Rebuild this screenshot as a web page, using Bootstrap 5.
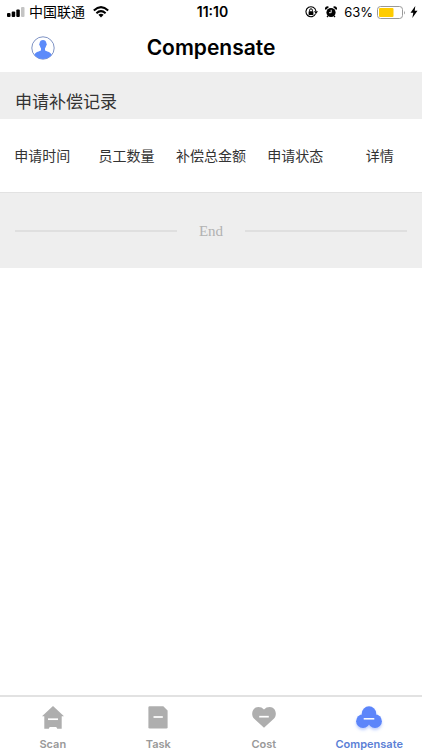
<!DOCTYPE html>
<html lang="zh-CN">
<head>
<meta charset="utf-8">
<meta name="viewport" content="width=device-width, initial-scale=1">
<title>Compensate</title>
<link href="https://cdn.jsdelivr.net/npm/bootstrap@5.3.0/dist/css/bootstrap.min.css" rel="stylesheet">
<style>
  body { font-family: Inter, "Noto Sans CJK SC", sans-serif; color: #333; }
  svg { display: block; flex: none; }
  .status-bar { height: 24px; font-size: 14px; line-height: 24px; color: #000; padding: 0 4px 0 7px; }
  .status-side { flex: 1 1 0; }
  .status-icons { gap: 7px; }
  .battery-group { gap: 4px; font-size: 13px; }
  .title-bar { height: 48px; }
  .title-side { flex: 1 1 0; padding-left: 31px; }
  .page-title { font-size: 21px; line-height: 28px; font-weight: 600; color: #000; }
  .band { background: #eee; }
  .section-title { font-size: 17px; line-height: 20px; padding: 20px 15px 7px; }
  .records { table-layout: fixed; font-size: 14px; line-height: 20px; border-bottom: 1px solid #e2e2e2; }
  .records th { padding: 27px 0 26px; font-weight: 400; color: #333; border: 0; }
  .end-band { padding: 28px 15px 27px; gap: 22px; font-family: "Liberation Serif", serif; font-size: 15px; line-height: 20px; color: #b2b2b2; }
  .rule { height: 2px; background: #dfdfdf; }
  .tabs { border-top: 2px solid #e2e2e2; padding-top: 7px; }
  .tab-link { color: #999; font-size: 11px; line-height: 12px; font-weight: 600; gap: 8px; }
  .tab-link.active { color: #5b7fd6; }
</style>
</head>
<body class="bg-white d-flex flex-column min-vh-100">
<header>
  <div class="status-bar d-flex align-items-center">
    <div class="status-side d-flex align-items-center">
      <svg width="18" height="12" viewBox="0 0 18 12"><rect y="7" width="3.5" height="4" rx="1"/><rect x="4.7" y="5.5" width="3.5" height="5.5" rx="1"/><rect x="9.3" y="3.5" width="3.5" height="7.5" rx="1"/><rect x="14" y="1" width="3.5" height="10" rx="1" fill="#c4c4c4"/></svg>
      <span class="ms-1 me-2">中国联通</span>
      <svg width="16" height="12" viewBox="0 0 16 12"><g fill="none" stroke="#000" stroke-width="2"><path d="M.8 4.400Q8-2.100 15.200 4.400"/><path d="M3.400 7.200Q8 3.100 12.600 7.200"/></g><path d="M5.400 8.800Q8 6.800 10.600 8.800L8 11.600z"/></svg>
    </div>
    <div class="fw-semibold">11:10</div>
    <div class="status-side status-icons d-flex align-items-center justify-content-end">
      <svg width="13" height="12" viewBox="0 0 13 12"><path d="M10.6 7.6A5 5 0 1 1 10.9 5" fill="none" stroke="#000" stroke-width="1.1"/><path d="M8.900 5.200h4.100L11 8z"/><rect x="3.600" y="5.300" width="4.800" height="3.600" rx=".5"/><path d="M4.600 5.500V4.200a1.400 1.400 0 0 1 2.800 0v1.300" fill="none" stroke="#000"/></svg>
      <svg width="12" height="12" viewBox="0 0 12 12"><circle cx="6" cy="6.500" r="4.600"/><path d="M.6 3.900A2.200 2.200 0 0 1 4 1.100zM11.400 3.900A2.200 2.200 0 0 0 8 1.100z"/><path d="M3 9.800L2 11M9 9.800L10 11" stroke="#000" stroke-width="1.200"/><path d="M6.200 3.800v2.900H4" fill="none" stroke="#fff" stroke-width=".9"/></svg>
      <div class="battery-group d-flex align-items-center">
        <span>63%</span>
        <svg width="29" height="13" viewBox="0 0 29 13"><rect x=".5" y=".5" width="25" height="12" rx="3" fill="#fff" stroke="#999"/><rect x="2" y="2" width="14.500" height="9" rx="1" fill="#fc0"/><path d="M27 4.500q1.700 2 0 4z" fill="#999"/></svg>
        <svg width="8" height="12" viewBox="0 0 8 12"><path d="M5.300 0L.5 6.800h2.800L2.300 12 7.500 4.800H4.700z"/></svg>
      </div>
    </div>
  </div>
  <div class="title-bar d-flex align-items-center">
    <div class="title-side">
      <button type="button" class="btn p-0 border-0 d-block" aria-label="Profile">
        <svg width="24" height="24" viewBox="0 0 24 24"><circle cx="12" cy="12" r="11.200" fill="#fff" stroke="#7187bd" stroke-width=".9"/><path d="M8.600 7.500C8.400 2.800 15.600 2.800 15.400 7.500c.7.300.4 2-.3 2.300-.2 1.200-.6 1.900-1.100 2.500v2c1 1.500 5.600 1.200 6.600 4.600A11 11 0 0 1 3.400 18.900c1-3.400 5.600-3.100 6.600-4.600v-2c-.5-.6-.9-1.300-1.100-2.500-.7-.3-1-2-.3-2.300z" fill="#5c8bfa"/></svg>
      </button>
    </div>
    <h1 class="page-title mb-0">Compensate</h1>
    <div class="title-side"></div>
  </div>
</header>
<main class="flex-grow-1">
  <h2 class="section-title band fw-normal mb-0">申请补偿记录</h2>
  <table class="records w-100 text-center">
    <thead><tr><th scope="col">申请时间</th><th scope="col">员工数量</th><th scope="col">补偿总金额</th><th scope="col">申请状态</th><th scope="col">详情</th></tr></thead>
  </table>
  <div class="end-band band d-flex align-items-center">
    <div class="rule flex-fill"></div><span>End</span><div class="rule flex-fill"></div>
  </div>
</main>
<nav class="tabs row g-0 text-center">
  <div class="col"><a href="#scan" class="tab-link d-flex flex-column align-items-center text-decoration-none">
    <svg width="26" height="26" viewBox="0 0 26 26"><path d="M13 2L24 12.300h-2.300v12.400h-4.500q-.2-1.600-1.400-1.600h-5.600q-1.200 0-1.400 1.600H4.300V12.300H2z" fill="#aeaeae"/><path d="M8 15.200h10" stroke="#fff" stroke-width="1.700"/></svg>
    <span>Scan</span></a></div>
  <div class="col"><a href="#task" class="tab-link d-flex flex-column align-items-center text-decoration-none">
    <svg width="26" height="26" viewBox="0 0 26 26"><path d="M4.500 2.300h13.800l4.300 4.300v16.600q0 1.300-1.300 1.300H4.700q-1.300 0-1.300-1.300V3.500q0-1.200 1.100-1.200z" fill="#aeaeae"/><path d="M8.500 13h9.300" stroke="#fff" stroke-width="1.700"/></svg>
    <span>Task</span></a></div>
  <div class="col"><a href="#cost" class="tab-link d-flex flex-column align-items-center text-decoration-none">
    <svg width="26" height="26" viewBox="0 0 26 26"><path d="M13 23.800L3.200 14.700C-.8 10.700 1.400 3 7.300 3q3.500 0 5.700 2.400Q15.200 3 18.700 3C24.600 3 26.800 10.700 22.800 14.700z" fill="#aeaeae"/><path d="M8.200 12.700h9.600" stroke="#fff" stroke-width="1.700"/></svg>
    <span>Cost</span></a></div>
  <div class="col"><a href="#compensate" aria-current="page" class="tab-link active d-flex flex-column align-items-center text-decoration-none">
    <svg width="34" height="26" viewBox="0 0 34 26" overflow="visible"><defs><filter id="glow" x="-30%" y="-30%" width="160%" height="170%"><feDropShadow dx="0" dy="2" stdDeviation="1.800" flood-color="#5c85fa" flood-opacity=".4"/></filter></defs><g fill="#5c85fa" filter="url(#glow)"><circle cx="17" cy="9.500" r="7.200"/><circle cx="11" cy="17.200" r="6.900"/><circle cx="23" cy="17.200" r="6.900"/></g><path d="M11.700 14.800h10.600" stroke="#fff" stroke-width="1.500"/></svg>
    <span>Compensate</span></a></div>
</nav>
<script src="https://cdn.jsdelivr.net/npm/bootstrap@5.3.0/dist/js/bootstrap.bundle.min.js"></script>
</body>
</html>
